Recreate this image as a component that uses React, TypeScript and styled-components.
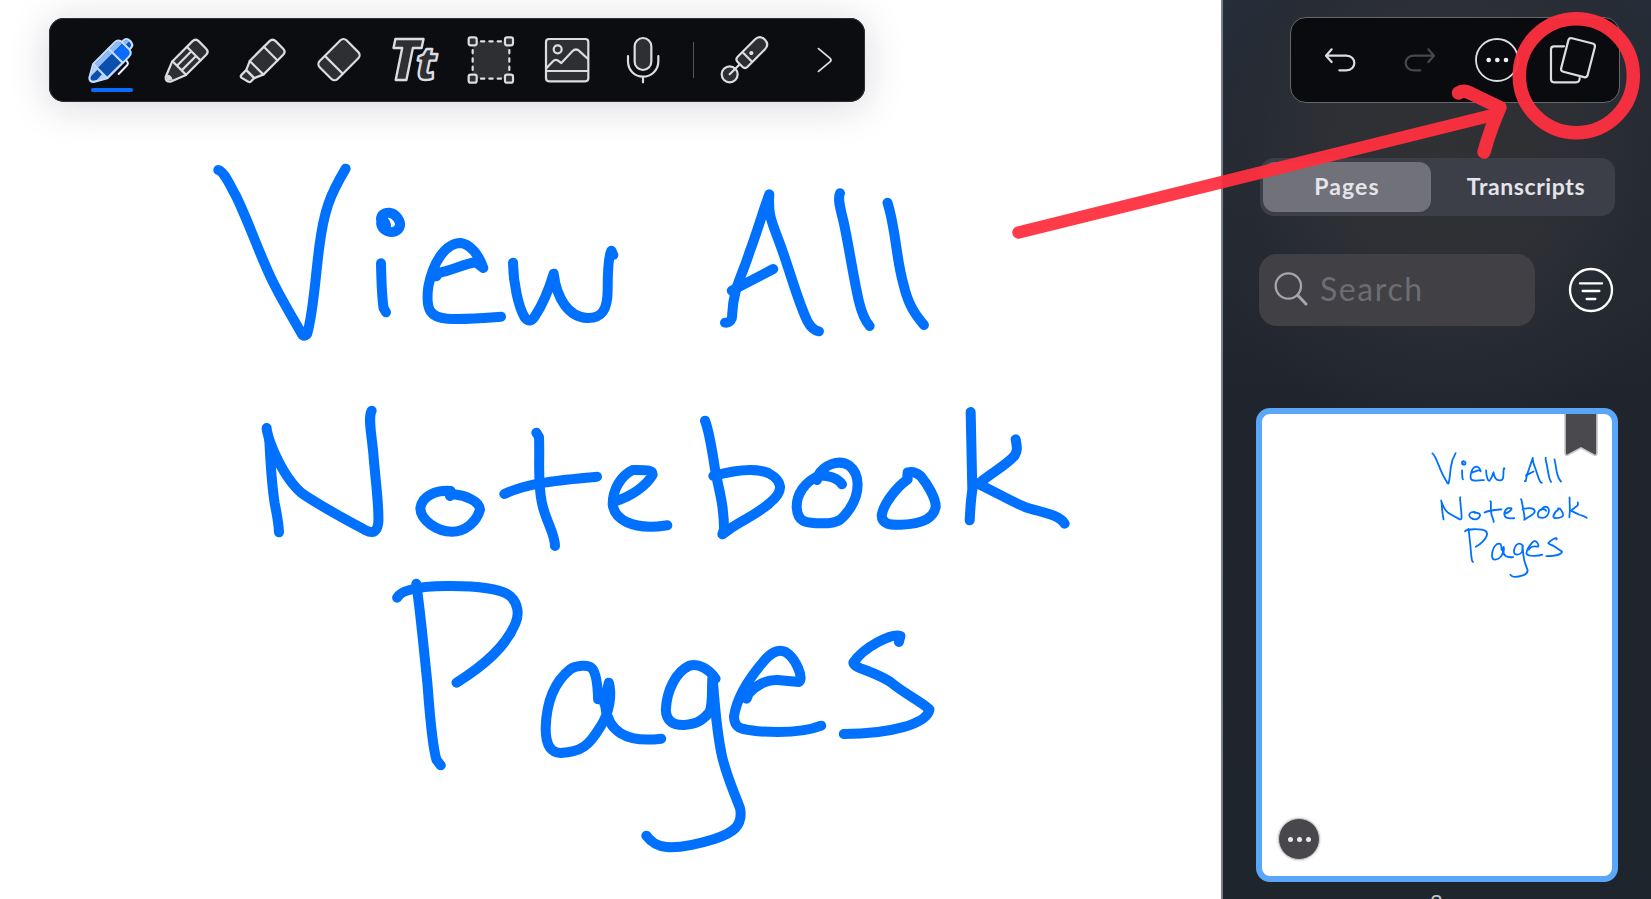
import React from "react";
import styled, { createGlobalStyle } from "styled-components";

const GlobalStyle = createGlobalStyle`
  * { box-sizing: border-box; }
  body { margin: 0; background: #fff; overflow: hidden; }
`;

const Screen = styled.div`
  position: relative;
  display: flex;
  width: 1651px;
  height: 899px;
  overflow: hidden;
  font-family: Lato, "Open Sans", sans-serif;
`;

const Canvas = styled.main`
  position: relative;
  flex: 1;
  padding: 18px 0 0 49px;
  background: #fff;
`;

const Toolbar = styled.div`
  position: relative;
  display: flex;
  align-items: center;
  width: 816px;
  height: 84px;
  padding-left: 24px;
  border-radius: 15px;
  background: #0c0d11;
  box-shadow: inset 0 0 0 1px #2d2e33, 0 4px 40px rgba(20, 20, 50, 0.17);
`;

const Tool = styled.button<{ $active?: boolean; $width?: number }>`
  position: relative;
  display: flex;
  width: ${(p) => p.$width ?? 76}px;
  height: 84px;
  padding: 0;
  border: 0;
  background: none;

  &::after {
    content: "";
    display: ${(p) => (p.$active ? "block" : "none")};
    position: absolute;
    left: 18px;
    bottom: 10px;
    width: 42px;
    height: 4px;
    border-radius: 2px;
    background: #0a6cff;
  }
`;

const Glyph = styled.svg<{ $dim?: boolean; $fill?: string }>`
  width: 100%;
  height: 84px;
  fill: ${(p) => p.$fill ?? "#2e2f33"};
  stroke: ${(p) => (p.$dim ? "#47484b" : "#dcdde1")};
  stroke-width: 6.6;
  stroke-linecap: round;
  stroke-linejoin: round;
`;

const Divider = styled.span`
  width: 1px;
  height: 36px;
  margin: 0 12px;
  background: #55565a;
`;

const Ink = styled.svg<{ $width: number }>`
  position: absolute;
  inset: 0;
  width: 100%;
  height: 100%;
  fill: none;
  stroke: #0070ff;
  stroke-width: ${(p) => p.$width}px;
  stroke-linecap: round;
  stroke-linejoin: round;
  pointer-events: none;

  path { vector-effect: non-scaling-stroke; }
`;

const Sidebar = styled.aside`
  display: flex;
  flex-direction: column;
  width: 430px;
  height: 899px;
  padding: 17px 31px 0 33px;
  border-left: 2px solid #7b7f88;
  background:
    radial-gradient(ellipse 270px 290px at 225px 150px, #303134 0%, #2d2f34 45%, rgba(39, 43, 51, 0.7) 75%, rgba(32, 37, 44, 0) 100%),
    linear-gradient(#252e3b 0, #242a34 180px, #20252d 400px, #1f252d 899px);
`;

const ActionBar = styled.div`
  display: flex;
  align-self: flex-end;
  width: 330px;
  height: 86px;
  padding-left: 9.5px;
  border: 1px solid #66676b;
  border-radius: 16px;
  background: #0a0b0e;
`;

const Segments = styled.div`
  display: flex;
  width: 355px;
  height: 58px;
  margin: 55px 0 0 4px;
  padding: 4px 3px;
  border-radius: 14px;
  background: #3c3f48;
`;

const Segment = styled.button<{ $selected?: boolean }>`
  flex: ${(p) => (p.$selected ? "0 0 168px" : "1")};
  height: 50px;
  padding: 0 0 3px ${(p) => (p.$selected ? 0 : 9)}px;
  border: 0;
  border-radius: 12px;
  background: ${(p) => (p.$selected ? "#707179" : "none")};
  color: #e4e4ea;
  font: 700 23px Lato, sans-serif;
  letter-spacing: ${(p) => (p.$selected ? 1.1 : 0.6)}px;
`;

const SearchRow = styled.div`
  display: flex;
  align-items: center;
  justify-content: space-between;
  width: 355px;
  height: 72px;
  margin: 38px 0 0 3px;
`;

const SearchBox = styled.label`
  display: flex;
  align-items: center;
  gap: 12px;
  width: 276px;
  height: 72px;
  padding: 0 0 3px 15px;
  border-radius: 18px;
  background: #404045;
  color: #6d6d72;
  font-size: 32px;
  font-weight: 400;
  letter-spacing: 1.6px;
`;

const FilterButton = styled.button`
  width: 46px;
  height: 46px;
  padding: 0;
  border: 0;
  background: none;
`;

const LineArt = styled.svg<{ $color: string }>`
  display: block;
  fill: none;
  stroke: ${(p) => p.$color};
  stroke-width: 7;
  stroke-linecap: round;
`;

const PageCard = styled.article`
  position: relative;
  flex: none;
  width: 362px;
  height: 474px;
  margin-top: 82px;
  border: 6px solid #5aa6f8;
  border-radius: 14px;
  background: #fff;
  overflow: hidden;
`;

const Bookmark = styled.svg`
  position: absolute;
  top: 0;
  right: 13px;
  width: 36px;
  height: 46px;
`;

const PageMenu = styled.button`
  position: absolute;
  left: 16px;
  bottom: 16px;
  display: flex;
  align-items: center;
  justify-content: center;
  gap: 4px;
  width: 42px;
  height: 42px;
  padding: 0;
  border: 1.5px solid #c9c9cf;
  border-radius: 50%;
  background: #48474c;
  box-shadow: 0 0 3px rgba(0, 0, 0, 0.2);
`;

const Dot = styled.i`
  width: 5px;
  height: 5px;
  border-radius: 50%;
  background: #ececf0;
`;

const PageNumber = styled.div`
  flex: none;
  margin: 8px 3px 0 0;
  text-align: center;
  color: #c3c5c9;
  font-size: 22px;
  line-height: 24px;
`;

const Annotation = styled.svg`
  position: absolute;
  inset: 0;
  width: 1651px;
  height: 899px;
  fill: none;
  stroke: #ff3040;
  stroke-width: 13.5;
  stroke-linecap: round;
  stroke-linejoin: round;
  opacity: 0.95;
  pointer-events: none;
`;

function Icon({ cx, span = 228, dim, fill, children }: {
  cx: number; span?: number; dim?: boolean; fill?: string; children: React.ReactNode;
}) {
  return (
    <Glyph viewBox={`${cx - span / 2} 54 ${span} 252`} $dim={dim} $fill={fill} aria-hidden="true">
      {children}
    </Glyph>
  );
}

function Handwriting() {
  return (
    <>
      <g transform="translate(200 140) scale(.33333)">
        <path d="M55 90C72 95 88 132 108 168C150 255 175 335 215 418C245 480 285 545 306 583Q312 592 321 583C340 520 345 420 358 320C372 210 390 165 437 86" />
        <path d="M543 238C543 226 552 217 568 218C588 220 602 243 600 257C595 275 578 279 563 274C545 267 541 252 545 240C552 240 560 252 558 262" />
        <path d="M543 370C544 420 546 475 551 505L558 517" />
        <path d="M709 409L716 399C750 392 795 372 827 366L850 384C835 340 808 312 782 309C735 310 699 368 685 440C675 515 695 533 742 536C800 539 850 534 903 530" />
        <path d="M939 368C940 430 955 500 974 532Q990 552 1004 530C1022 503 1045 455 1061 401C1070 475 1105 531 1162 534C1205 535 1223 510 1223 450C1223 410 1225 350 1234 332L1240 345" />
      </g>
      <g transform="translate(680 160) scale(.357143 .33333)">
        <path d="M126 488C140 490 147 477 146 464C150 380 173 352 195 275C218 210 233 150 250 103C246 170 258 187 281 255C310 340 330 425 357 484Q370 510 389 514" />
        <path d="M145 392L261 327" />
        <path d="M448 100C441 115 448 143 458 185C475 270 485 350 500 420Q512 475 531 498" />
        <path d="M581 128C604 205 605 295 625 370C638 430 655 460 683 495" />
      </g>
      <g transform="translate(240 390) scale(.33333)">
        <path d="M80 114C80 124 85 137 88 150C91 215 95 280 104 340C110 370 116 398 117 427" />
        <path d="M88 150C110 210 145 273 183 308C235 345 310 385 377 421Q411 438 415 397C418 350 405 260 400 190C393 120 384 83 395 62" />
        <path d="M630 318L632 303C590 300 545 317 541 355C542 390 590 425 636 425C675 425 710 396 720 359C719 333 675 316 641 313" />
        <path d="M889 128L897 141C900 210 892 280 906 340C917 393 945 430 945 468" />
        <path d="M793 312C870 276 970 270 1071 260" />
        <path d="M1128 333C1175 318 1218 288 1238 254C1238 239 1223 240 1178 240C1143 257 1118 298 1118 343C1125 395 1185 411 1235 410C1260 410 1270 407 1282 406" />
      </g>
      <g transform="translate(660 390) scale(.33333)">
        <path d="M135 92C150 130 157 190 168 255C182 315 192 360 192 418L187 433L219 410C260 384 295 370 329 339C374 302 368 273 325 249C280 231 215 243 160 258" />
        <path d="M471 270L475 258C435 275 410 312 410 350C412 395 432 400 488 400C535 400 545 390 568 358C604 305 598 250 568 227C535 205 490 227 474 257C500 253 535 265 546 283" />
        <path d="M743 268C710 291 671 340 665 376C665 403 690 405 722 404C775 403 819 390 827 352C829 325 800 280 783 259C770 247 760 244 743 247L742 260" />
        <path d="M932 66L937 300C932 330 931 360 929 391" />
        <path d="M1067 148C1072 175 1072 183 1065 195C1045 223 990 250 955 282C1010 308 1055 335 1093 350C1145 368 1195 372 1214 401" />
      </g>
      <g transform="translate(370 560) scale(.3827 .33333)">
        <path d="M121 71C132 160 140 260 150 370C156 460 162 560 174 600L185 616" />
        <path d="M71 113C80 90 125 79 200 78C280 77 345 87 366 108C388 130 390 165 380 190C355 260 300 315 226 368" />
        <path d="M596 418C595 370 591 340 580 325C570 313 540 316 524 327C482 365 461 420 459 505C459 560 475 578 498 579C552 576 572 558 602 500C628 455 632 400 624 368L612 430" />
        <path d="M615 440C622 510 665 550 761 536" />
        <path d="M903 356C885 325 858 310 835 317C800 335 775 390 773 450C774 482 792 497 822 495C855 492 870 480 887 457C897 430 892 380 895 350C900 410 903 500 920 590C935 660 953 700 967 745C976 800 945 820 900 837C850 855 810 864 775 861C747 858 734 845 722 827" />
        <path d="M984 416L990 400C1010 375 1035 359 1065 360L1121 366C1135 350 1110 300 1097 286C1075 260 1050 275 1030 302C990 355 958 410 951 470C953 510 974 507 1015 514C1080 519 1140 515 1179 497" />
        <path d="M1382 246L1386 228C1365 217 1290 262 1263 308C1264 325 1310 330 1360 366C1395 400 1438 423 1462 448C1455 492 1360 522 1238 522" />
      </g>
    </>
  );
}

export default function App() {
  return (
    <Screen>
      <GlobalStyle />
      <Canvas>
        <Toolbar>
          <Tool $active aria-label="Pen">
            <Icon cx={242}>
              <path d="M286 179L292 187Q294 191 291 195L265 222" fill="none" stroke="#e6f0ff" strokeWidth="6" />
              <g transform="translate(243 180) rotate(45)" stroke="#c4dcff">
                <path d="M-16 -60V-66Q-16 -80 0 -80T16 -66V-60Z" fill="#0a55c4" />
                <path d="M-13 -60V-66Q-12 -77 -2 -77V-60Z" fill="#8fbcf4" stroke="none" />
                <path d="M-30 -44Q-30 -60 -14 -60H14Q30 -60 30 -44V47L9 84Q0 93 -9 84L-30 47Z" fill="#0a4fae" />
                <path d="M-27 -44Q-27 -57 -12 -57V46L-27 46Z" fill="#8fbcf4" stroke="none" />
                <path d="M-10 -57H14Q27 -57 27 -44V-20H-10Z" fill="#0a6cff" stroke="none" />
                <path d="M-26 49L-9 79V49ZM10 49H26L12 74Z" fill="#b4d2fa" stroke="none" />
                <path d="M-30 -18H30M-28 47H28" />
              </g>
            </Icon>
          </Tool>
          <Tool aria-label="Pencil">
            <Icon cx={471}>
              <g transform="translate(472 180) rotate(45)">
                <path d="M-29 -50Q-29 -64 -15 -64H15Q29 -64 29 -50V35L10 82Q0 93 -10 82L-29 35Z" />
                <path d="M-29 -27H29M-29 34H29M-10 -27V34M10 -27V34" />
                <path d="M-9 74Q0 68 9 74L0 86Z" fill="#dcdde1" strokeWidth="3" />
              </g>
            </Icon>
          </Tool>
          <Tool aria-label="Highlighter">
            <Icon cx={698}>
              <g transform="translate(702 180) rotate(45)">
                <path d="M-29 -50Q-29 -64 -15 -64H15Q29 -64 29 -50V32L17 60H-17L-29 32Z" />
                <path d="M-29 -27H29M-29 33H29" />
                <path d="M-17 60H17V74Q17 79 12 80L-10 86Q-17 87 -17 80Z" />
              </g>
            </Icon>
          </Tool>
          <Tool aria-label="Eraser">
            <Icon cx={927}>
              <g transform="translate(927 179) rotate(45)">
                <rect x="-38" y="-57" width="76" height="114" rx="13" />
                <path d="M-37 22H37" />
              </g>
            </Icon>
          </Tool>
          <Tool aria-label="Text">
            <Icon cx={1155}>
              <g fontFamily="Open Sans" fontStyle="italic" fontWeight="800" strokeWidth="7">
                <text x="1078" y="240" fontSize="168">T</text>
                <text x="1159" y="240" fontSize="136">t</text>
              </g>
            </Icon>
          </Tool>
          <Tool aria-label="Select">
            <Icon cx={123}>
              <rect x="68" y="124" width="110" height="112" stroke="none" />
              <path d="M93 124H153M93 236H153M68 150V212M178 150V212" strokeDasharray="10 15" fill="none" />
              {[[68, 124], [177, 124], [68, 236], [177, 236]].map(([x, y]) => (
                <rect key={`${x}-${y}`} x={x - 12} y={y - 12} width="24" height="24" rx="6" />
              ))}
            </Icon>
          </Tool>
          <Tool aria-label="Image">
            <Icon cx={351}>
              <rect x="288" y="117" width="127" height="127" rx="9" />
              <circle cx="323" cy="148" r="12" />
              <path d="M289 205L309 184Q316 177 323 181L334 189L367 154Q378 143 389 154L414 177M289 213H414" fill="none" />
            </Icon>
          </Tool>
          <Tool aria-label="Record">
            <Icon cx={579}>
              <rect x="554" y="114" width="50" height="96" rx="25" />
              <path d="M534 168V184C534 212 555 230 579 230S625 212 625 184V168M579 230V247" fill="none" />
            </Icon>
          </Tool>
          <Divider />
          <Tool aria-label="Laser pointer">
            <Icon cx={881}>
              <circle cx="838" cy="223" r="24" />
              <path d="M838 223L870 191" />
              <g transform="translate(903 159) rotate(45)">
                <path d="M-21 -36Q-21 -57 0 -57T21 -36V37Q21 48 10 48H-10Q-21 48 -21 37ZM-21 17H21" />
                <circle r="3" fill="#dcdde1" />
              </g>
            </Icon>
          </Tool>
          <Tool $width={83} aria-label="More tools">
            <Icon cx={1120} span={249}>
              <path d="M1105 146L1140 175Q1145 180 1140 185L1105 214" fill="none" strokeWidth="5.5" />
            </Icon>
          </Tool>
        </Toolbar>
        <Ink $width={10} viewBox="0 0 1221 899" role="img" aria-label="View All Notebook Pages">
          <Handwriting />
        </Ink>
      </Canvas>

      <Sidebar>
        <ActionBar>
          <Tool $width={78} aria-label="Undo">
            <Icon cx={389} span={234} fill="none">
              <path d="M364 148L347 167L364 186M348 167H408C440 167 440 211 408 211H387" />
            </Icon>
          </Tool>
          <Tool $width={78} aria-label="Redo">
            <Icon cx={623} span={234} fill="none" dim>
              <path d="M654 148L671 167L654 186M670 167H610C578 167 578 211 610 211H630" />
            </Icon>
          </Tool>
          <Tool $width={78} aria-label="More">
            <Icon cx={857} span={234} fill="none">
              <circle cx="860" cy="180" r="63" strokeWidth="5.5" />
              <g fill="#f0f0f3" stroke="none">
                <circle cx="835" cy="180" r="7" />
                <circle cx="861" cy="180" r="7" />
                <circle cx="887" cy="180" r="7" />
              </g>
            </Icon>
          </Tool>
          <Tool $width={78} aria-label="View pages">
            <Icon cx={1091} span={234} fill="none">
              <path d="M1061 139H1031Q1022 139 1022 148V238Q1022 247 1031 247H1097Q1108 247 1108 234" />
              <rect x="1062" y="121" width="82" height="104" rx="9" transform="rotate(14.5 1103 173)" />
            </Icon>
          </Tool>
        </ActionBar>

        <Segments>
          <Segment $selected>Pages</Segment>
          <Segment>Transcripts</Segment>
        </Segments>

        <SearchRow>
          <SearchBox>
            <LineArt $color="#a5a5ae" width="34" height="34" viewBox="0 0 102 102">
              <circle cx="43" cy="42" r="38" />
              <path d="M71 70L96 96" strokeWidth="9" />
            </LineArt>
            Search
          </SearchBox>
          <FilterButton aria-label="Filter">
            <LineArt $color="#ffffff" width="46" height="46" viewBox="0 0 138 138">
              <circle cx="69" cy="69" r="63" />
              <path d="M36 49H102M44 72H94M56 96H82" />
            </LineArt>
          </FilterButton>
        </SearchRow>

        <PageCard>
          <Ink $width={1.8} viewBox="0 0 350 462" role="img" aria-label="Page preview">
            <g transform="translate(130.6 8.4) scale(.1823)">
              <Handwriting />
            </g>
          </Ink>
          <Bookmark viewBox="0 0 36 46">
            <path d="M2 -2H34V39Q34 42 31 41L18 34L5 41Q2 42 2 39Z" fill="#4a4a4e" stroke="#c9c9ce" strokeWidth="1.6" />
          </Bookmark>
          <PageMenu aria-label="Page options"><Dot /><Dot /><Dot /></PageMenu>
        </PageCard>
        <PageNumber>2</PageNumber>
      </Sidebar>

      <Annotation viewBox="0 0 1651 899" aria-hidden="true">
        <path d="M1018.5 232.5L1497 114" strokeWidth="12.5" />
        <path d="M1458.5 93Q1464 89 1472 94L1500 107.5Q1491 127 1484 152" />
        <circle cx="1576.3" cy="75.7" r="57" />
      </Annotation>
    </Screen>
  );
}
